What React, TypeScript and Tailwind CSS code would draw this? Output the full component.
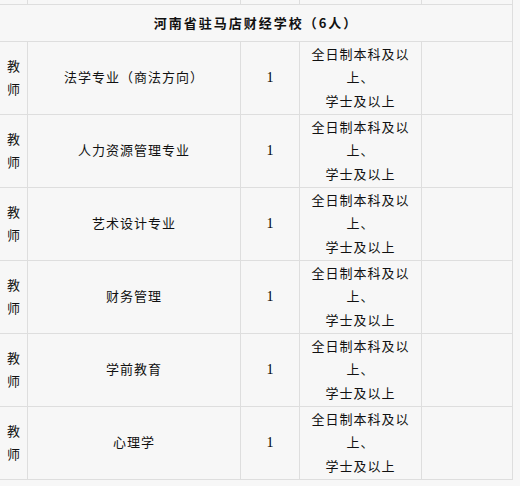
const rows = [
  '法学专业（商法方向）',
  '人力资源管理专业',
  '艺术设计专业',
  '财务管理',
  '学前教育',
  '心理学',
];

const cjk = { fontFamily: '"Noto Sans CJK SC", "Noto Sans", sans-serif' };

function Row({ major }: { major: string }) {
  return (
    <div className="flex h-[73px] border-b border-[#dedede]">
      <div className="w-[28px] shrink-0 border-r border-[#dedede] flex flex-col items-center justify-center pb-[2px] leading-[23px]">
        <span>教</span>
        <span>师</span>
      </div>
      <div className="w-[213px] shrink-0 border-r border-[#dedede] flex items-center justify-center pb-[2px] tracking-[1px]">
        {major}
      </div>
      <div
        className="w-[59px] shrink-0 border-r border-[#dedede] flex items-center justify-center pb-[2px] text-[14px] text-black"
        style={{ fontFamily: '"Liberation Serif", serif' }}
      >
        1
      </div>
      <div className="w-[122px] shrink-0 border-r border-[#dedede] flex flex-col items-center justify-center pb-[2px] leading-[23.5px] tracking-[1px]">
        <span>全日制本科及以</span>
        <span>上、</span>
        <span>学士及以上</span>
      </div>
      <div className="w-[91px] shrink-0 border-r border-[#dedede]" />
    </div>
  );
}

export default function App() {
  return (
    <div className="w-[520px] h-[486px] overflow-hidden bg-[#f7f7f7] text-[13px] text-[#111]" style={cjk}>
      <div className="w-[513px]">
        {/* tail of the previous row */}
        <div className="flex h-[5px] border-b border-[#dedede]">
          <div className="w-[28px] shrink-0 border-r border-[#dedede]" />
          <div className="w-[213px] shrink-0 border-r border-[#dedede]" />
          <div className="w-[59px] shrink-0 border-r border-[#dedede]" />
          <div className="w-[122px] shrink-0 border-r border-[#dedede]" />
          <div className="w-[91px] shrink-0 border-r border-[#dedede]" />
        </div>
        <div className="flex h-[37px] items-center justify-center border-b border-r border-[#dedede] pb-[1px] font-bold tracking-[2px]">
          河南省驻马店财经学校（6人）
        </div>
        {rows.map((m) => (
          <Row key={m} major={m} />
        ))}
      </div>
    </div>
  );
}
